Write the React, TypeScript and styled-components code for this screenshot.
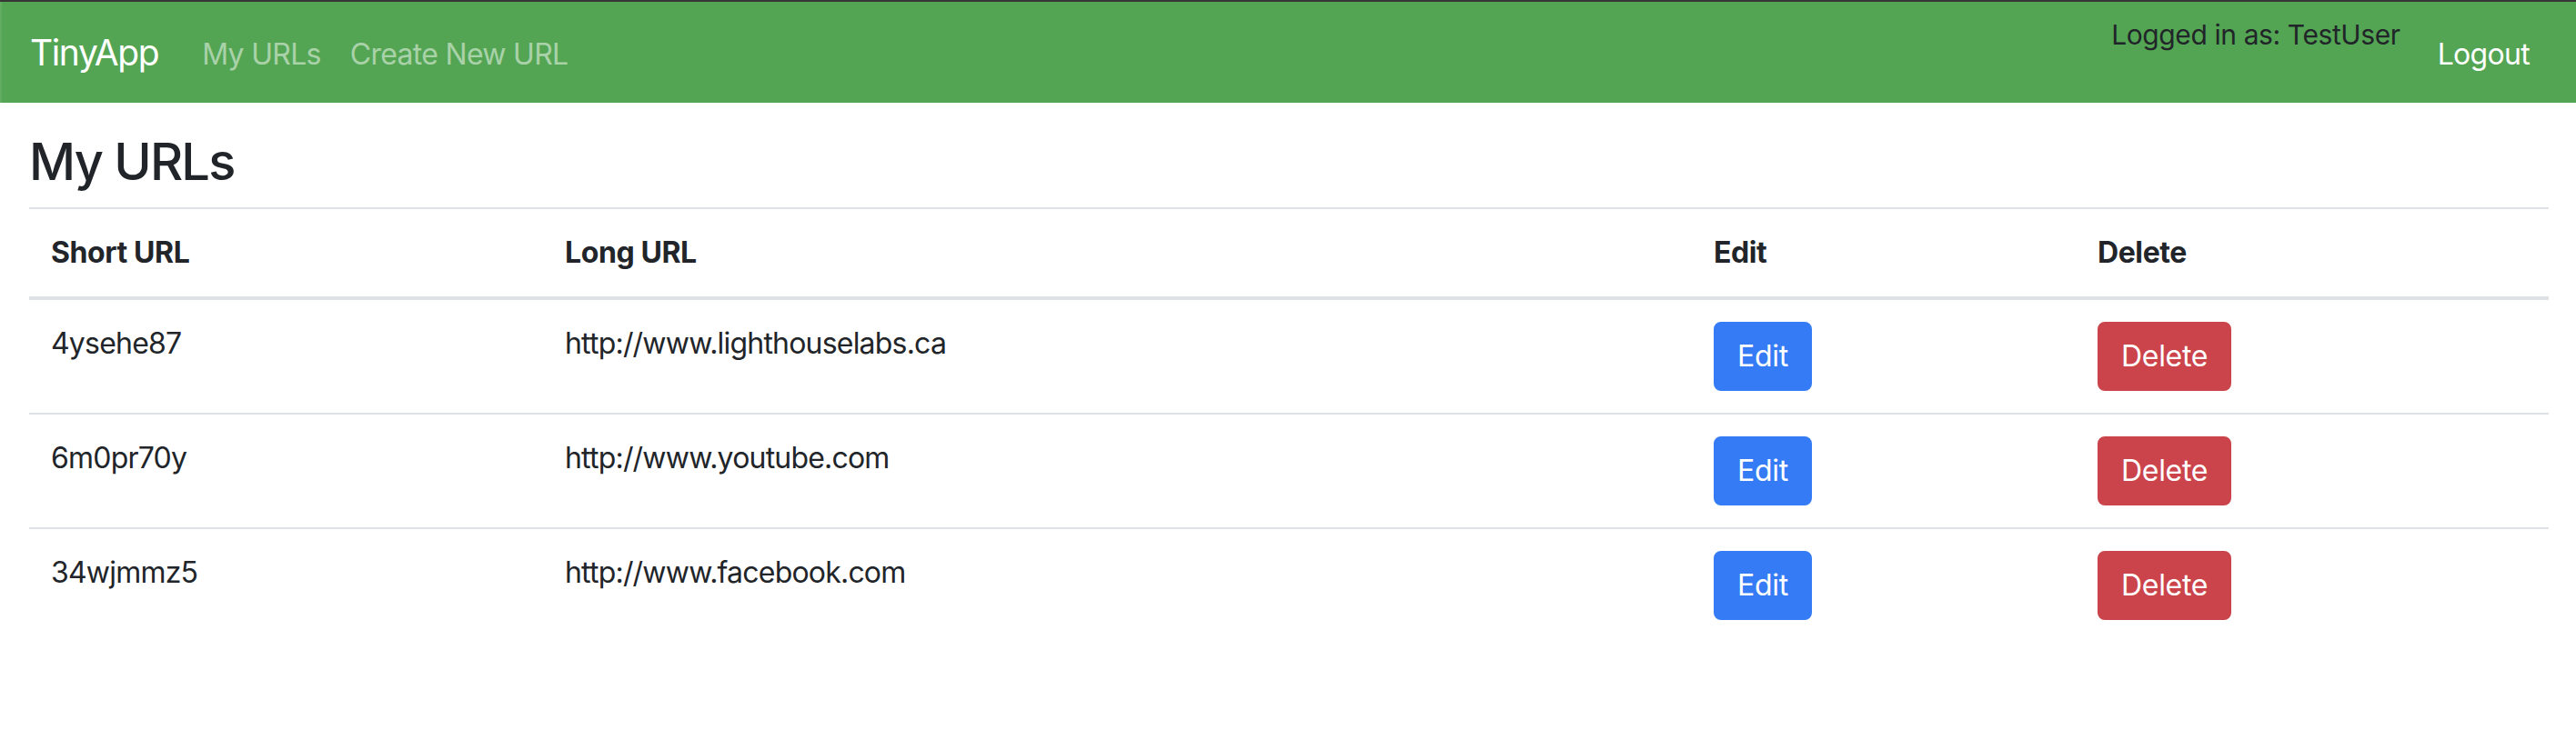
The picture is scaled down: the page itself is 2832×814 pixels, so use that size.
import { FC } from 'react';
import styled, { createGlobalStyle } from 'styled-components';

const GlobalStyle = createGlobalStyle`
  html, body {
    margin: 0;
    padding: 0;
    background: #ffffff;
  }
  body {
    font-family: Inter, "Noto Sans", "Liberation Sans", sans-serif;
    color: #212529;
    -webkit-font-smoothing: antialiased;
  }
  * {
    box-sizing: border-box;
  }
`;

const Frame = styled.div`
  min-height: 814px;
  border-top: 2px solid #363636;
`;

const NavBar = styled.nav`
  display: flex;
  align-items: center;
  height: 111px;
  padding: 0 35px 0 33px;
  background: #53a553;
  box-shadow: inset 2px 0 0 #61ac61;
`;

const Brand = styled.a`
  font-size: 39px;
  line-height: 60px;
  color: #ffffff;
  margin-right: 32px;
  text-decoration: none;
  letter-spacing: -1.4px;
`;

const NavLinks = styled.div`
  display: flex;
  align-items: center;
`;

const NavLink = styled.a<{ $active?: boolean }>`
  font-size: 32px;
  line-height: 48px;
  padding: 4px 16px 0;
  color: ${({ $active }) => ($active ? '#ffffff' : 'rgba(255, 255, 255, 0.5)')};
  text-decoration: none;
  letter-spacing: -0.7px;
`;

const UserArea = styled.div`
  display: flex;
  align-items: flex-start;
  margin-left: auto;
`;

const LoggedIn = styled.span`
  font-size: 30px;
  line-height: 48px;
  margin-top: -18px;
  margin-right: 25px;
  color: #212529;
  letter-spacing: -0.4px;
`;

const Container = styled.main`
  padding: 0 30px 0 32px;
`;

const Title = styled.h3`
  margin: 32px 0 16px;
  font-size: 56px;
  line-height: 67px;
  font-weight: 500;
  letter-spacing: -1.8px;
  color: #212529;
`;

const Table = styled.table`
  width: 100%;
  border-collapse: collapse;
  font-size: 32px;
  line-height: 48px;
  color: #212529;
`;

const HeadCell = styled.th<{ $width?: number }>`
  width: ${({ $width }) => ($width ? `${$width}px` : 'auto')};
  padding: 24px;
  text-align: left;
  font-weight: 700;
  letter-spacing: -0.4px;
  border-top: 2px solid #dee2e6;
  border-bottom: 4px solid #dee2e6;
  vertical-align: bottom;
`;

const Cell = styled.td`
  padding: 24px;
  vertical-align: top;
  border-top: 2px solid #dee2e6;
  letter-spacing: -0.8px;
`;

const Button = styled.button<{ $variant: 'primary' | 'danger' }>`
  display: inline-block;
  padding: 12px 24px;
  font-family: inherit;
  font-size: 32px;
  line-height: 48px;
  letter-spacing: -0.3px;
  color: #ffffff;
  border: 2px solid ${({ $variant }) => ($variant === 'primary' ? '#367bf6' : '#cb444b')};
  border-radius: 8px;
  background: ${({ $variant }) => ($variant === 'primary' ? '#367bf6' : '#cb444b')};
  cursor: pointer;
`;

interface Url {
  short: string;
  long: string;
}

const urls: Url[] = [
  { short: '4ysehe87', long: 'http://www.lighthouselabs.ca' },
  { short: '6m0pr70y', long: 'http://www.youtube.com' },
  { short: '34wjmmz5', long: 'http://www.facebook.com' },
];

const App: FC = () => (
  <>
    <GlobalStyle />
    <Frame>
      <NavBar>
        <Brand href="#">TinyApp</Brand>
        <NavLinks>
          <NavLink href="#">My URLs</NavLink>
          <NavLink href="#">Create New URL</NavLink>
        </NavLinks>
        <UserArea>
          <LoggedIn>Logged in as: TestUser</LoggedIn>
          <NavLink href="#" $active>
            Logout
          </NavLink>
        </UserArea>
      </NavBar>
      <Container>
        <Title>My URLs</Title>
        <Table>
          <thead>
            <tr>
              <HeadCell $width={565}>Short URL</HeadCell>
              <HeadCell $width={1263}>Long URL</HeadCell>
              <HeadCell $width={422}>Edit</HeadCell>
              <HeadCell>Delete</HeadCell>
            </tr>
          </thead>
          <tbody>
            {urls.map((url) => (
              <tr key={url.short}>
                <Cell>{url.short}</Cell>
                <Cell>{url.long}</Cell>
                <Cell>
                  <Button $variant="primary">Edit</Button>
                </Cell>
                <Cell>
                  <Button $variant="danger">Delete</Button>
                </Cell>
              </tr>
            ))}
          </tbody>
        </Table>
      </Container>
    </Frame>
  </>
);

export default App;
